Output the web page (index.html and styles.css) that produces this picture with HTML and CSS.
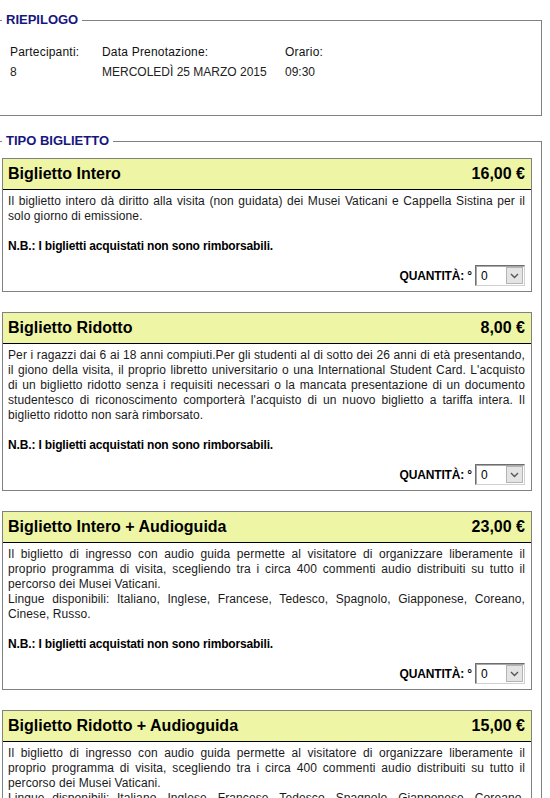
FILE: index.html
```html
<!DOCTYPE html>
<html lang="it">
<head>
    <meta charset="UTF-8">
    <meta name="viewport" content="width=device-width, initial-scale=1.0">
    <title>Riepilogo - Tipo Biglietto</title>
    <link rel="stylesheet" href="styles.css">
</head>
<body>

<div class="page">

    <fieldset class="panel summary">
        <legend>RIEPILOGO</legend>
        <div class="summary-grid">
            <div class="summary-label">Partecipanti:</div>
            <div class="summary-label">Data Prenotazione:</div>
            <div class="summary-label">Orario:</div>
            <div>8</div>
            <div>MERCOLEDÌ 25 MARZO 2015</div>
            <div>09:30</div>
        </div>
    </fieldset>

    <fieldset class="panel tickets">
        <legend>TIPO BIGLIETTO</legend>

        <div class="ticket">
            <div class="ticket-head">
                <span>Biglietto Intero</span>
                <span>16,00 €</span>
            </div>
            <div class="ticket-body">
                <p class="ticket-text">Il biglietto intero dà diritto alla visita (non guidata) dei Musei Vaticani e Cappella Sistina per il solo giorno di emissione.<br><br><b>N.B.: I biglietti acquistati non sono rimborsabili.</b></p>
                <div class="ticket-qty">
                    <label for="qty1">QUANTITÀ: °</label>
                    <span class="qty-box">
                        <select id="qty1"><option>0</option><option>1</option><option>2</option></select>
                        <span class="qty-arrow"><svg width="9" height="6" viewBox="0 0 9 6"><path d="M1 1l3.5 3.5L8 1" fill="none" stroke="#555" stroke-width="1.4"/></svg></span>
                    </span>
                </div>
            </div>
        </div>

        <div class="ticket">
            <div class="ticket-head">
                <span>Biglietto Ridotto</span>
                <span>8,00 €</span>
            </div>
            <div class="ticket-body">
                <p class="ticket-text">Per i ragazzi dai 6 ai 18 anni compiuti.Per gli studenti al di sotto dei 26 anni di età presentando, il giono della visita, il proprio libretto universitario o una International Student Card. L'acquisto di un biglietto ridotto senza i requisiti necessari o la mancata presentazione di un documento studentesco di riconoscimento comporterà l'acquisto di un nuovo biglietto a tariffa intera. Il biglietto ridotto non sarà rimborsato.<br><br><b>N.B.: I biglietti acquistati non sono rimborsabili.</b></p>
                <div class="ticket-qty">
                    <label for="qty2">QUANTITÀ: °</label>
                    <span class="qty-box">
                        <select id="qty2"><option>0</option><option>1</option><option>2</option></select>
                        <span class="qty-arrow"><svg width="9" height="6" viewBox="0 0 9 6"><path d="M1 1l3.5 3.5L8 1" fill="none" stroke="#555" stroke-width="1.4"/></svg></span>
                    </span>
                </div>
            </div>
        </div>

        <div class="ticket">
            <div class="ticket-head">
                <span>Biglietto Intero + Audioguida</span>
                <span>23,00 €</span>
            </div>
            <div class="ticket-body">
                <p class="ticket-text">Il biglietto di ingresso con audio guida permette al visitatore di organizzare liberamente il proprio programma di visita, scegliendo tra i circa 400 commenti audio distribuiti su tutto il percorso dei Musei Vaticani.<br>Lingue disponibili: Italiano, Inglese, Francese, Tedesco, Spagnolo, Giapponese, Coreano, Cinese, Russo.<br><br><b>N.B.: I biglietti acquistati non sono rimborsabili.</b></p>
                <div class="ticket-qty">
                    <label for="qty3">QUANTITÀ: °</label>
                    <span class="qty-box">
                        <select id="qty3"><option>0</option><option>1</option><option>2</option></select>
                        <span class="qty-arrow"><svg width="9" height="6" viewBox="0 0 9 6"><path d="M1 1l3.5 3.5L8 1" fill="none" stroke="#555" stroke-width="1.4"/></svg></span>
                    </span>
                </div>
            </div>
        </div>

        <div class="ticket">
            <div class="ticket-head">
                <span>Biglietto Ridotto + Audioguida</span>
                <span>15,00 €</span>
            </div>
            <div class="ticket-body">
                <p class="ticket-text">Il biglietto di ingresso con audio guida permette al visitatore di organizzare liberamente il proprio programma di visita, scegliendo tra i circa 400 commenti audio distribuiti su tutto il percorso dei Musei Vaticani.<br>Lingue disponibili: Italiano, Inglese, Francese, Tedesco, Spagnolo, Giapponese, Coreano, Cinese, Russo.<br><br><b>N.B.: I biglietti acquistati non sono rimborsabili.</b></p>
                <div class="ticket-qty">
                    <label for="qty4">QUANTITÀ: °</label>
                    <span class="qty-box">
                        <select id="qty4"><option>0</option><option>1</option><option>2</option></select>
                        <span class="qty-arrow"><svg width="9" height="6" viewBox="0 0 9 6"><path d="M1 1l3.5 3.5L8 1" fill="none" stroke="#555" stroke-width="1.4"/></svg></span>
                    </span>
                </div>
            </div>
        </div>

    </fieldset>

</div>

</body>
</html>
```

FILE: styles.css
```css
body {
    margin: 0;
    font-family: Arial, "Liberation Sans", sans-serif;
    font-size: 12px;
    color: #1a1a1a;
    background-color: #ffffff;
}

.page {
    margin-left: -10px;
    width: 552px;
}

.panel {
    margin: 0;
    border: 1px solid #808080;
    min-width: 0;
}

.panel legend {
    padding: 0 4px;
    font-size: 13px;
    line-height: 16px;
    font-weight: bold;
    color: #16167f;
}

.summary {
    margin-top: 12px;
    padding: 14px 9px 33px 11px;
}

.summary-grid {
    display: grid;
    grid-template-columns: 92px 183px auto;
    padding-left: 8px;
    line-height: 20px;
    color: #222222;
}

.summary-label {
    color: #111111;
    letter-spacing: 0.2px;
}

.tickets {
    margin-top: 17px;
    padding: 9px 9px 0 11px;
}

.ticket {
    border: 1px solid #808080;
    margin-bottom: 20px;
}

.ticket-head {
    display: flex;
    justify-content: space-between;
    align-items: center;
    height: 30px;
    padding: 0 6px 0 5px;
    background-color: #eef5a4;
    border-bottom: 1px solid #000000;
    font-size: 16px;
    font-weight: bold;
    color: #000000;
}

.ticket-body {
    padding: 4px 6px 5px 5px;
}

.ticket-text {
    margin: 0;
    line-height: 15px;
    text-align: justify;
    letter-spacing: 0.1px;
}

.ticket-text b {
    color: #000000;
    letter-spacing: -0.15px;
}

.ticket-qty {
    display: flex;
    justify-content: flex-end;
    align-items: center;
    gap: 3px;
    margin-top: 11px;
    font-weight: bold;
    letter-spacing: -0.15px;
    color: #000000;
}

.qty-box {
    position: relative;
    display: block;
    width: 50px;
    height: 21px;
}

.qty-box select {
    appearance: none;
    -webkit-appearance: none;
    display: block;
    width: 50px;
    height: 21px;
    margin: 0;
    padding: 0 0 0 5px;
    font-family: Arial, "Liberation Sans", sans-serif;
    font-size: 12px;
    color: #000000;
    background-color: #ffffff;
    border: 1px solid;
    border-color: #6e6e6e #d0d0d0 #d0d0d0 #6e6e6e;
    box-shadow: inset 1px 1px 0 #a8a8a8;
    border-radius: 0;
    outline: none;
}

/* freccia disegnata sopra la select */
.qty-arrow {
    position: absolute;
    top: 2px;
    right: 2px;
    width: 15px;
    height: 15px;
    display: flex;
    align-items: center;
    justify-content: center;
    background-color: #e4e4e4;
    border: 1px solid #b4b4b4;
    pointer-events: none;
}
```
